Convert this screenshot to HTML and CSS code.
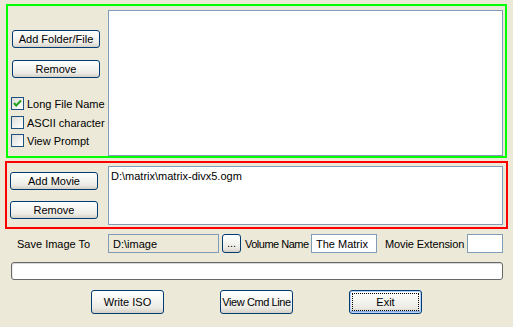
FILE: index.html
```html
<!DOCTYPE html>
<html lang="en">
<head>
    <meta charset="UTF-8">
    <title>Make ISO</title>
    <link rel="stylesheet" href="styles.css">
</head>
<body>
<div class="window">
    <div class="group group_files">
        <div class="side side_files">
            <button class="btn btn_side">Add Folder/File</button>
            <button class="btn btn_side btn_next">Remove</button>
            <label class="check check_first"><span class="box checked"><svg width="11" height="11" viewBox="0 0 11 11"><path d="M2 5 L4.2 7.5 L9 2.5" fill="none" stroke="#21a121" stroke-width="2"/></svg></span>Long File Name</label>
            <label class="check"><span class="box"></span>ASCII character</label>
            <label class="check check_last"><span class="box"></span>View Prompt</label>
        </div>
        <div class="list list_files"></div>
    </div>
    <div class="group group_movie">
        <div class="side side_movie">
            <button class="btn btn_side">Add Movie</button>
            <button class="btn btn_side btn_next2">Remove</button>
        </div>
        <div class="list list_movie">D:\matrix\matrix-divx5.ogm</div>
    </div>
    <div class="options">
        <span class="lbl lbl_save">Save Image To</span>
        <input class="field field_path" type="text" value="D:\image" readonly>
        <button class="btn btn_browse">...</button>
        <span class="lbl lbl_vol">Volume Name</span>
        <input class="field field_vol" type="text" value="The Matrix">
        <span class="lbl lbl_ext">Movie Extension</span>
        <input class="field field_ext" type="text" value="">
    </div>
    <div class="progress"></div>
    <div class="actions">
        <button class="btn btn_action">Write ISO</button>
        <button class="btn btn_action btn_cmd">View Cmd Line</button>
        <button class="btn btn_action btn_default">Exit</button>
    </div>
</div>
</body>
</html>
```
FILE: styles.css
```css
*{margin: 0;padding: 0;box-sizing: border-box}
body{
    background: #ece9d8;
    font-family: "Liberation Sans", Arial, sans-serif;
    font-size: 11px;
    color: #000;
}
.window{
    width: 513px;
    height: 327px;
    padding-top: 4px;
    overflow: hidden;
}
    .group{
        display: flex;
    }
    .group_files{
        margin-left: 6px;
        width: 501px;
        height: 154px;
        border: 2px solid #00ff00;
    }
    .group_movie{
        margin-top: 3px;
        margin-left: 5px;
        width: 503px;
        height: 68px;
        border: 2px solid #ff0000;
    }
        .side{
            flex: none;
            display: flex;
            flex-direction: column;
            align-items: flex-start;
        }
        .side_files{
            width: 100px;
            padding: 24px 0 0 4px;
        }
        .side_movie{
            width: 101px;
            padding: 9px 0 0 3px;
        }
        .list{
            flex: 1;
            background: #fff;
            border: 1px solid #7f9db9;
        }
        .list_files{
            margin: 4px 2px 0 0;
        }
        .list_movie{
            margin: 3px 3px 2px 0;
            padding: 3px 0 0 2px;
            line-height: 13px;
        }
.btn{
    font-family: "Liberation Sans", Arial, sans-serif;
    font-size: 11px;
    color: #000;
    border: 1px solid #003c74;
    border-radius: 3px;
    background: linear-gradient(#ffffff, #f4f4f0 45%, #ecebe5 75%, #d6d0c5);
    text-align: center;
    white-space: nowrap;
    overflow: visible;
}
    .btn_side{
        width: 88px;
        height: 18px;
    }
    .btn_next{
        margin-top: 12px;
    }
    .btn_next2{
        margin-top: 11px;
    }
.check{
    display: flex;
    align-items: center;
    height: 13px;
    margin-left: -1px;
    margin-top: 6px;
    white-space: nowrap;
}
.check_first{
    margin-top: 19px;
}
.check_last{
    margin-top: 5px;
}
    .box{
        width: 13px;
        height: 13px;
        margin-right: 3px;
        border: 1px solid #1c5180;
        background: linear-gradient(135deg, #dcdcd7, #f6f6f4 70%, #ffffff);
        display: flex;
        align-items: center;
        justify-content: center;
    }
.options{
    display: flex;
    align-items: center;
    height: 19px;
    margin-top: 5px;
}
    .lbl{
        flex: none;
        white-space: nowrap;
    }
    .lbl_save{
        width: 108px;
        padding-left: 17px;
    }
    .lbl_vol{
        width: 70px;
        padding-left: 4px;
        letter-spacing: -0.5px;
    }
    .lbl_ext{
        width: 90px;
        padding-left: 8px;
        letter-spacing: -0.1px;
    }
    .field{
        flex: none;
        height: 19px;
        border: 1px solid #7f9db9;
        background: #fff;
        font-family: "Liberation Sans", Arial, sans-serif;
        font-size: 11px;
        color: #000;
        padding: 0 4px;
        outline: none;
    }
    .field_path{
        width: 111px;
        background: #ece9d8;
    }
    .field_vol{
        width: 66px;
    }
    .field_ext{
        width: 36px;
    }
    .btn_browse{
        flex: none;
        width: 19px;
        height: 19px;
        margin-left: 3px;
        line-height: 12px;
        padding-bottom: 2px;
    }
.progress{
    margin: 9px 0 0 11px;
    width: 492px;
    height: 18px;
    border: 1px solid #686868;
    border-radius: 3px;
    background: #fff;
    box-shadow: inset 0 1px 0 #d8d8d8, inset 1px 0 0 #ececec;
}
.actions{
    display: flex;
    gap: 56px;
    margin-top: 10px;
    padding-left: 91px;
}
    .btn_action{
        width: 73px;
        height: 24px;
    }
    .btn_cmd{
        letter-spacing: -0.4px;
    }
    .btn_default{
        border-color: #003c74;
        box-shadow: inset 0 0 0 1px #b9d1fa, inset 0 -1px 0 1px #89ade4;
        outline: 1px dotted #000;
        outline-offset: -4px;
    }
```
